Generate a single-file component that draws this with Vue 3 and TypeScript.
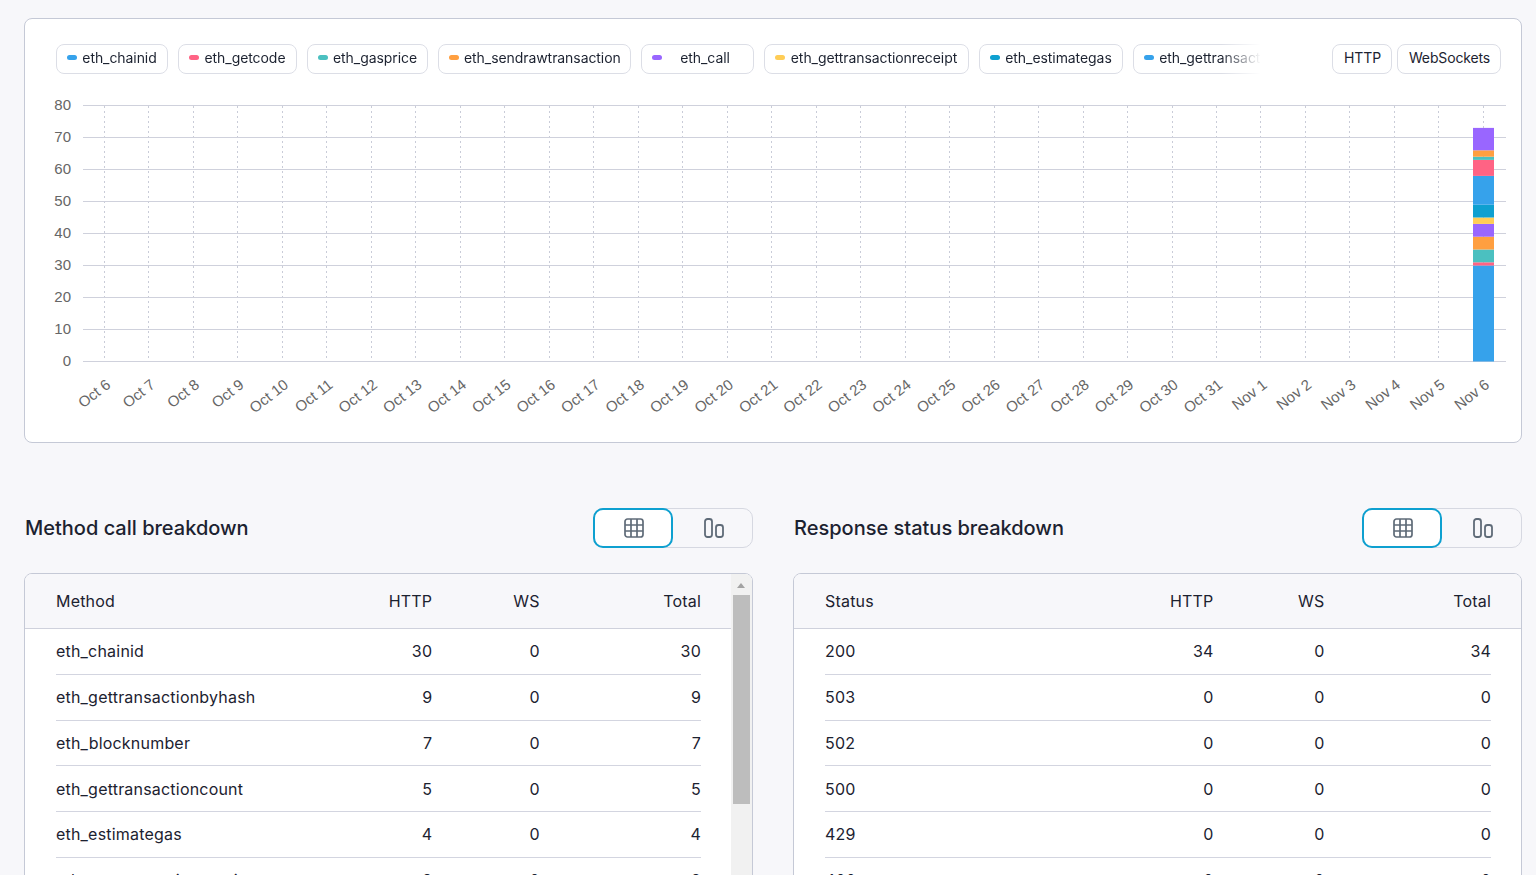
<script setup lang="ts">
import { computed } from 'vue';

interface Row {
    name: string;
    http: number;
    ws: number;
    total: number;
}

const legend = [
    { label: 'eth_chainid', color: '#36a2eb', w: 112 },
    { label: 'eth_getcode', color: '#ff6384', w: 119 },
    { label: 'eth_gasprice', color: '#4bc0c0', w: 121 },
    { label: 'eth_sendrawtransaction', color: '#ff9f40', w: 193 },
    { label: 'eth_call', color: '#9966ff', w: 113 },
    { label: 'eth_gettransactionreceipt', color: '#ffcd56', w: 205 },
    { label: 'eth_estimategas', color: '#0ea0d0', w: 144 },
    { label: 'eth_gettransactionbyhash', color: '#36a2eb', w: 206 },
];

const methods: Row[] = [
    { name: 'eth_chainid', http: 30, ws: 0, total: 30 },
    { name: 'eth_gettransactionbyhash', http: 9, ws: 0, total: 9 },
    { name: 'eth_blocknumber', http: 7, ws: 0, total: 7 },
    { name: 'eth_gettransactioncount', http: 5, ws: 0, total: 5 },
    { name: 'eth_estimategas', http: 4, ws: 0, total: 4 },
    { name: 'eth_gettransactionreceipt', http: 2, ws: 0, total: 2 },
];

const statuses: Row[] = [
    { name: '200', http: 34, ws: 0, total: 34 },
    { name: '503', http: 0, ws: 0, total: 0 },
    { name: '502', http: 0, ws: 0, total: 0 },
    { name: '500', http: 0, ws: 0, total: 0 },
    { name: '429', http: 0, ws: 0, total: 0 },
    { name: '400', http: 0, ws: 0, total: 0 },
];

const panels = [
    { title: 'Method call breakdown', head: 'Method', rows: methods, scroll: true },
    { title: 'Response status breakdown', head: 'Status', rows: statuses, scroll: false },
];

// chart geometry
const top = 31.5;
const unit = 3.2;
const firstX = 79.5;
const stepX = 44.48;
const yTicks = [80, 70, 60, 50, 40, 30, 20, 10, 0];

const dates: string[] = [];
for (let d = 6; d <= 31; d++) dates.push('Oct ' + d);
for (let d = 1; d <= 6; d++) dates.push('Nov ' + d);

const stack = [
    { v: 30, c: '#36a2eb' },
    { v: 1, c: '#ff6384' },
    { v: 4, c: '#4bc0c0' },
    { v: 4, c: '#ff9f40' },
    { v: 4, c: '#9966ff' },
    { v: 2, c: '#ffcd56' },
    { v: 4, c: '#0ea0d0' },
    { v: 9, c: '#36a2eb' },
    { v: 5, c: '#ff6384' },
    { v: 1, c: '#4bc0c0' },
    { v: 2, c: '#ff9f40' },
    { v: 7, c: '#9966ff' },
];

const segments = computed(() => {
    let y = top + 80 * unit;
    return stack.map((s) => {
        const h = s.v * unit;
        y -= h;
        return { y, h, c: s.c };
    });
});

const yOf = (tick: number) => top + (80 - tick) * unit;
</script>

<template>
    <div class="page">
        <section class="chart-card">
            <div class="chart-top">
                <div class="legend">
                    <div v-for="item in legend" :key="item.label" class="pill" :style="{ width: item.w + 'px' }">
                        <i class="dot" :style="{ background: item.color }"></i>
                        <span class="pill-text">{{ item.label }}</span>
                    </div>
                </div>
                <div class="protocols">
                    <div class="proto">HTTP</div>
                    <div class="proto">WebSockets</div>
                </div>
            </div>
            <svg class="chart" width="1496" height="368" viewBox="0 0 1496 368">
                <line
                    v-for="(d, i) in dates"
                    :key="'v' + d"
                    class="crisp"
                    :x1="firstX + i * stepX"
                    :x2="firstX + i * stepX"
                    :y1="top"
                    :y2="yOf(0)"
                    stroke="#c9ccd8"
                    stroke-dasharray="2 3"
                />
                <g v-for="t in yTicks" :key="t">
                    <line class="crisp" x1="58" x2="1481" :y1="yOf(t)" :y2="yOf(t)" stroke="#cfd1dc" />
                    <text class="tick" x="46" :y="yOf(t) + 4" text-anchor="end">{{ t }}</text>
                </g>
                <rect
                    v-for="(s, i) in segments"
                    :key="i"
                    x="1448"
                    :y="s.y"
                    width="21"
                    :height="s.h"
                    :fill="s.c"
                />
                <text
                    v-for="(d, i) in dates"
                    :key="d"
                    class="tick"
                    text-anchor="end"
                    :transform="`translate(${firstX + i * stepX + 7} ${yOf(0) + 25}) rotate(-38)`"
                >{{ d }}</text>
            </svg>
        </section>

        <div class="columns">
            <section v-for="panel in panels" :key="panel.title" class="panel">
                <header class="panel-head">
                    <h2>{{ panel.title }}</h2>
                    <div class="switch">
                        <button class="switch-btn active">
                            <svg width="20" height="20" viewBox="0 0 20 20" fill="none" stroke="#5f6b78" stroke-width="1.7">
                                <rect x="1" y="1" width="18" height="18" rx="2.5" />
                                <path d="M1 7h18M1 13h18M7 1v18M13 1v18" />
                            </svg>
                        </button>
                        <button class="switch-btn">
                            <svg width="20" height="20" viewBox="0 0 20 20" fill="none" stroke="#5f6b78" stroke-width="1.8">
                                <rect x="1" y="1" width="7" height="18" rx="2.5" />
                                <rect x="12" y="7" width="7" height="12" rx="2.5" />
                            </svg>
                        </button>
                    </div>
                </header>
                <div class="table-card">
                    <div class="head-band">
                        <div class="row head" :class="{ scrolled: panel.scroll }">
                            <span class="name">{{ panel.head }}</span>
                            <span>HTTP</span>
                            <span>WS</span>
                            <span>Total</span>
                        </div>
                    </div>
                    <div v-for="row in panel.rows" :key="row.name" class="row" :class="{ scrolled: panel.scroll }">
                        <span class="name">{{ row.name }}</span>
                        <span>{{ row.http }}</span>
                        <span>{{ row.ws }}</span>
                        <span>{{ row.total }}</span>
                    </div>
                    <div v-if="panel.scroll" class="scrollbar">
                        <i class="arrow"></i>
                        <div class="thumb"></div>
                    </div>
                </div>
            </section>
        </div>
    </div>
</template>

<style>
html,
body {
    margin: 0;
    height: 875px;
    overflow: hidden;
    background: #f7f7fa;
}
</style>

<style scoped>
.page {
    box-sizing: border-box;
    width: 1536px;
    padding: 18px 14px 0 24px;
    font-family: Inter, "Liberation Sans", sans-serif;
    color: #1c2230;
}

.chart-card {
    box-sizing: border-box;
    height: 425px;
    background: #fff;
    border: 1px solid #c5c9d6;
    border-radius: 8px;
}

.chart-top {
    display: flex;
    justify-content: space-between;
    padding: 25px 20px 0 31px;
}

.legend {
    display: flex;
    gap: 10px;
    width: 1205px;
    overflow: hidden;
    -webkit-mask-image: linear-gradient(to right, #000 1165px, transparent 1205px);
    mask-image: linear-gradient(to right, #000 1165px, transparent 1205px);
}

.pill {
    box-sizing: border-box;
    flex: none;
    display: flex;
    align-items: center;
    height: 30px;
    padding: 0 10px 3px;
    background: #fff;
    border: 1px solid #dcdee6;
    border-radius: 8px;
    font-size: 14px;
    letter-spacing: -0.07px;
    white-space: nowrap;
}

.dot {
    flex: none;
    width: 10px;
    height: 5px;
    margin-right: 5px;
    border-radius: 3px;
}

.pill-text {
    flex: 1;
    text-align: center;
}

.protocols {
    display: flex;
    gap: 5px;
}

.proto {
    box-sizing: border-box;
    display: flex;
    align-items: center;
    height: 30px;
    padding: 0 10px 3px 11px;
    border: 1px solid #dcdee6;
    border-radius: 8px;
    font-size: 14px;
    letter-spacing: -0.15px;
}

.chart {
    display: block;
}

.crisp {
    shape-rendering: crispEdges;
}

.tick {
    font-family: "Liberation Sans", Arial, sans-serif;
    font-size: 15px;
    fill: #666;
}

.columns {
    display: grid;
    grid-template-columns: 729px 729px;
    gap: 40px;
    margin-top: 65px;
}

.panel-head {
    display: flex;
    align-items: center;
    justify-content: space-between;
    height: 40px;
    margin-bottom: 25px;
}

.panel-head h2 {
    margin: 0 0 0 1px;
    font-size: 20px;
    font-weight: 500;
}

.switch {
    display: flex;
    width: 160px;
    height: 40px;
    border: 1px solid #d6d8e1;
    border-radius: 10px;
    box-sizing: border-box;
    background: #f7f7fa;
}

.switch-btn {
    display: flex;
    align-items: center;
    justify-content: center;
    box-sizing: border-box;
    flex: 1;
    margin: -1px;
    padding: 0 0 0 4px;
    background: transparent;
    border: 0;
    border-radius: 10px;
}

.switch-btn.active {
    flex: none;
    width: 80px;
    height: 40px;
    padding-left: 2px;
    background: #fff;
    border: 2px solid #0ea0d0;
}

.table-card {
    position: relative;
    box-sizing: border-box;
    height: 400px;
    background: #fff;
    border: 1px solid #c5c9d6;
    border-radius: 8px;
    overflow: hidden;
    font-size: 16px;
    letter-spacing: 0.2px;
}

.head-band {
    background: #f7f7fa;
    border-bottom: 1px solid #cfd1dc;
}

.row {
    box-sizing: border-box;
    display: grid;
    grid-template-columns: 5fr 2fr 2fr 3fr;
    align-items: center;
    height: 45.75px;
    margin: 0 30px 0 31px;
    border-bottom: 1px solid #d3d5e0;
    text-align: right;
}

.row.scrolled {
    margin-right: 51px;
}

.row.head {
    height: 54px;
    border-bottom: 0;
}

.name {
    text-align: left;
}

.scrollbar {
    position: absolute;
    top: 0;
    right: 0;
    bottom: 0;
    width: 21px;
    background: #f1f1f1;
}

.arrow {
    position: absolute;
    top: 9px;
    left: 6px;
    width: 0;
    height: 0;
    border-style: solid;
    border-width: 0 4.5px 5px 4.5px;
    border-color: transparent transparent #a3a3a3 transparent;
}

.thumb {
    position: absolute;
    top: 21px;
    left: 2px;
    width: 17px;
    height: 209px;
    background: #bdbdbd;
}
</style>
